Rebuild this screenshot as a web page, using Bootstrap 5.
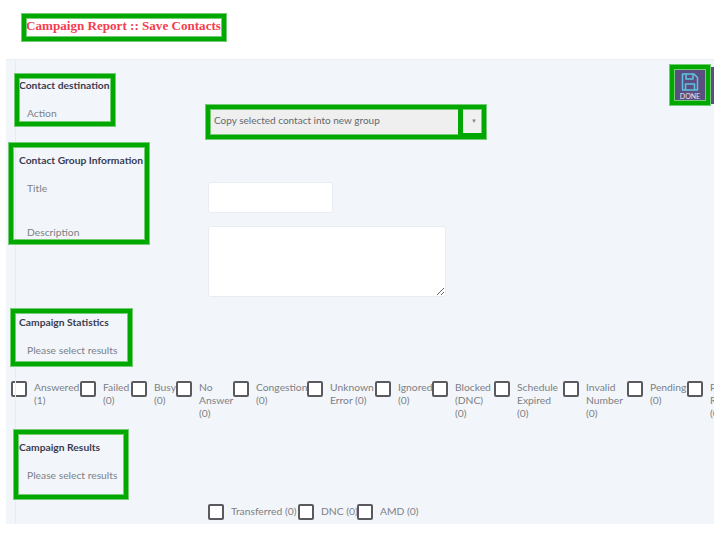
<!DOCTYPE html>
<html lang="en">
<head>
  <meta charset="UTF-8">
  <title>Campaign Report :: Save Contacts</title>
  <meta name="viewport" content="width=device-width, initial-scale=1">
  <link href="https://cdn.jsdelivr.net/npm/bootstrap@5.3.2/dist/css/bootstrap.min.css" rel="stylesheet">
  <style>
    body { font-family: Lato, "Liberation Sans", sans-serif; font-size: 10.3px; color: #7d7f85; background: #fff; overflow: hidden; position: relative; height: 533px; }
    .report-title { height: 59px; padding: 18px 0 0 26px; margin: 0; font: bold 13.1px/16px "Liberation Serif", serif; color: #f53d4e; }
    .panel-body { position: relative; margin: 0 7px 0 6px; padding: 18px 0 4px 13px; background: #f2f6fa; overflow: hidden; border-top: 1px solid #eceff2; }
    .panel-body::before { content: ""; position: absolute; left: 9px; top: 0; bottom: 0; width: 1px; background: #e8ecf0; }
    .sec-head { margin: 0; font-size: 10.3px; line-height: 14px; font-weight: 700; color: #3b3c50; position: relative; }
    .sec-second { margin-top: 17px; }
    .sec-third { margin-top: 18px; }
    .sec-fourth { margin-top: 20px; }
    .sec-label { width: 189px; flex: none; padding-left: 8px; line-height: 14px; }
    .sec-please { margin-top: 14px; width: auto; }
    .done-wrap { width: 41px; height: 37px; margin: -11px 0 0 0; overflow: hidden; }
    .done-btn { flex: none; width: 34px; height: 32px; margin-top: 2px; padding: 3px 0 0; border: 0; border-radius: 0; background: #5a4f80; color: #e9e9f0; font-size: 7px; line-height: 8px; font-weight: 400; }
    .done-btn svg { display: block; margin: 0 auto 1px; }
    .done-next { flex: none; width: 34px; height: 37px; background: #5a4f80; }
    .act-row { margin-top: 16px; clear: both; }
    .act-row .sec-label { margin-top: -2px; }
    .act-select { width: 251px; height: 28px; padding: 0 0 3px 6px; border: 0; border-radius: 0; background: #efefef; color: #66686c; font-size: 10px; appearance: none; font-family: inherit; }
    .act-arrow { width: 22px; height: 28px; background: #f0f0f0; color: #8a8a8a; font-size: 6px; padding-left: 8px; line-height: 25px; }
    .title-row { margin-top: 15px; }
    .desc-row { margin-top: 13px; }
    .title-row .sec-label, .desc-row .sec-label { margin-top: -1px; }
    .field-box { border: 1px solid #e9edf1; border-radius: 3px; background: #fff; padding: 4px; font-size: 10.3px; }
    .title-box { width: 125px; height: 31px; }
    .desc-box { width: 238px; height: 71px; }
    .stat-row { flex-wrap: nowrap; margin: 24px 0 0 -8px; }
    .stat-item { flex: none; display: flex; gap: 7px; line-height: 13px; white-space: nowrap; }
    .stat-item input, .res-item input { flex: none; width: 16px; height: 16px; margin: 0; border: 2px solid #5a5a5e; border-radius: 2px; background: #fff; appearance: none; }
    .res-row { margin: 22px 0 0 189px; }
    .res-item { display: flex; flex: none; gap: 7px; align-items: center; line-height: 14px; white-space: nowrap; }
    .res-item span { margin-top: -2px; }
    .anno { position: absolute; border: 5px solid #00a800; outline: 1px solid #74cd74; outline-offset: -1px; box-shadow: inset 0 0 0 1px #74cd74; pointer-events: none; }
    .anno-fill { position: absolute; background: #00a800; pointer-events: none; }
    .anno-title { left: 21px; top: 13px; width: 206px; height: 29px; }
    .anno-dest { left: 14px; top: 73px; width: 102px; height: 54px; }
    .anno-select { left: 205px; top: 104px; width: 282px; height: 36px; }
    .anno-split { left: 458px; top: 105px; width: 5px; height: 34px; }
    .anno-under { left: 463px; top: 133px; width: 23px; height: 3px; }
    .anno-group { left: 8px; top: 142px; width: 142px; height: 103px; }
    .anno-stats { left: 10px; top: 308px; width: 123px; height: 59px; }
    .anno-results { left: 13px; top: 429px; width: 116px; height: 71px; }
    .anno-done { left: 669px; top: 64px; width: 42px; height: 42px; }
  </style>
</head>
<body>

<h1 class="report-title">Campaign Report :: Save Contacts</h1>

<div class="panel-body">
  <div class="done-wrap d-flex gap-1 float-end">
    <button class="btn done-btn" type="button">
      <svg width="18" height="18" viewBox="0 0 18 18" fill="none" stroke="#5fc3de" stroke-width="1.5" stroke-linejoin="round">
        <path d="M1.5 1h11.5l3.5 3.5V17h-15z"/>
        <path d="M5 1v5h7V1"/>
        <path d="M4.5 17v-6h9v6"/>
      </svg>
      DONE
    </button>
    <div class="done-next"></div>
  </div>

  <h6 class="sec-head">Contact destination</h6>
  <div class="d-flex act-row">
    <div class="sec-label">Action</div>
    <div class="d-flex">
      <select class="act-select">
        <option>Copy selected contact into new group</option>
      </select>
      <div class="act-arrow ms-1">▼</div>
    </div>
  </div>

  <h6 class="sec-head sec-second">Contact Group Information</h6>
  <div class="d-flex title-row">
    <div class="sec-label">Title</div>
    <input class="field-box title-box" type="text">
  </div>
  <div class="d-flex desc-row">
    <div class="sec-label">Description</div>
    <textarea class="field-box desc-box"></textarea>
  </div>

  <h6 class="sec-head sec-third">Campaign Statistics</h6>
  <div class="sec-label sec-please">Please select results</div>
  <div class="d-flex stat-row" id="stat-row"></div>

  <h6 class="sec-head sec-fourth">Campaign Results</h6>
  <div class="sec-label sec-please">Please select results</div>
  <div class="d-flex res-row" id="res-row"></div>
</div>

<div class="anno anno-title"></div>
<div class="anno anno-dest"></div>
<div class="anno anno-select"></div>
<div class="anno-fill anno-split"></div>
<div class="anno-fill anno-under"></div>
<div class="anno anno-group"></div>
<div class="anno anno-stats"></div>
<div class="anno anno-results"></div>
<div class="anno anno-done"></div>

<script>
// label, width of the text column so the next box lands in place
const stats = [
  ["Answered<br>(1)", 46],
  ["Failed<br>(0)", 28],
  ["Busy<br>(0)", 22],
  ["No<br>Answer<br>(0)", 34],
  ["Congestion<br>(0)", 51],
  ["Unknown<br>Error (0)", 45],
  ["Ignored<br>(0)", 34],
  ["Blocked<br>(DNC)<br>(0)", 39],
  ["Schedule<br>Expired<br>(0)", 46],
  ["Invalid<br>Number<br>(0)", 41],
  ["Pending<br>(0)", 37],
  ["Pending<br>Retry<br>(0)", 40]
];
const results = [["Transferred (0)", 67], ["DNC (0)", 36], ["AMD (0)", 40]];

function renderChecks(id, list, cls) {
  document.getElementById(id).innerHTML = list.map(item =>
    `<label class="${cls}"><input type="checkbox"><span style="width:${item[1]}px">${item[0]}</span></label>`
  ).join("");
}

renderChecks("stat-row", stats, "stat-item");
renderChecks("res-row", results, "res-item");
</script>

<script src="https://cdn.jsdelivr.net/npm/bootstrap@5.3.2/dist/js/bootstrap.bundle.min.js"></script>
</body>
</html>
